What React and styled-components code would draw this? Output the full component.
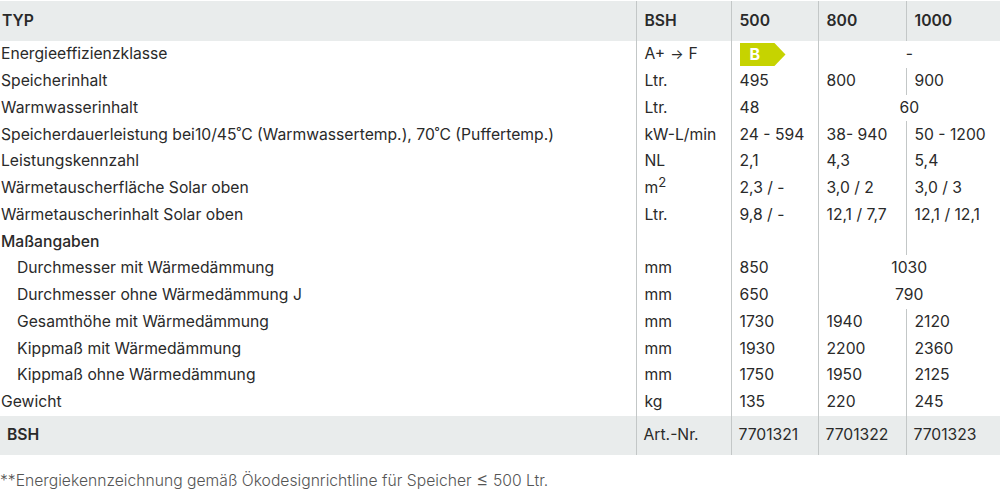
import React from "react";
import styled, { createGlobalStyle } from "styled-components";

const GlobalStyle = createGlobalStyle`
  html, body {
    margin: 0;
    padding: 0;
    background: #fff;
  }
  body {
    font-family: Inter, "Noto Sans", "Liberation Sans", sans-serif;
    color: #2a2a2a;
  }
`;

const Page = styled.div`
  width: 1000px;
  padding-top: 1px;
`;

const Table = styled.table`
  width: 1000px;
  border-collapse: collapse;
  table-layout: fixed;
  font-size: 15.7px;
`;

const HeadRow = styled.tr`
  height: 40px;
  background: #e9ecec;
  font-weight: 600;
`;

const FootRow = styled.tr`
  height: 39px;
  background: #e9ecec;
`;

const Row = styled.tr`
  height: 26.75px;
`;

const Cell = styled.td`
  padding: 0 8px;
  white-space: nowrap;
  vertical-align: middle;
  line-height: 20px;
  text-align: ${({ $center }) => ($center ? "center" : "left")};
  border-left: ${({ $first }) => ($first ? "none" : "1px solid #c3c7c7")};
`;

const LabelCell = styled(Cell)`
  padding-left: ${({ $indent }) => ($indent ? "17px" : "1px")};
  font-weight: ${({ $bold }) => ($bold ? 500 : 400)};
`;

const HeadCell = styled(Cell)`
  padding-left: ${({ $first }) => ($first ? "2px" : "8px")};
  font-weight: 600;
`;

const FootCell = styled(Cell)`
  padding-left: 7px;
  font-weight: ${({ $first }) => ($first ? 600 : 400)};
`;

const Badge = styled.span`
  display: inline-flex;
  align-items: center;
  width: 46px;
  height: 23px;
  padding-left: 10px;
  box-sizing: border-box;
  background: #c6d300;
  color: #fff;
  font-weight: 700;
  font-size: 16px;
  clip-path: polygon(0 0, 76% 0, 100% 50%, 76% 100%, 0 100%);
  vertical-align: middle;
`;

const Arrow = styled.span`
  font-size: 14px;
  margin: 0 5px;
`;

const Leq = styled.span`
  font-size: 19px;
  line-height: 0;
`;

const Note = styled.p`
  margin: 16px 0 0;
  font-size: 15.7px;
  line-height: 20px;
  font-weight: 300;
  color: #555;
`;

const rows = [
  {
    label: "Energieeffizienzklasse",
    unit: (
      <>
        A+<Arrow>→</Arrow>F
      </>
    ),
    cells: [<Badge key="b">B</Badge>],
    span: "-",
  },
  { label: "Speicherinhalt", unit: "Ltr.", cells: ["495", "800", "900"] },
  { label: "Warmwasserinhalt", unit: "Ltr.", cells: ["48"], span: "60" },
  {
    label: "Speicherdauerleistung bei10/45˚C (Warmwassertemp.), 70˚C (Puffertemp.)",
    unit: "kW-L/min",
    cells: ["24 - 594", "38- 940", "50 - 1200"],
  },
  { label: "Leistungskennzahl", unit: "NL", cells: ["2,1", "4,3", "5,4"] },
  {
    label: "Wärmetauscherfläche Solar oben",
    unit: (
      <>
        m<sup style={{ lineHeight: 0 }}>2</sup>
      </>
    ),
    cells: ["2,3 / -", "3,0 / 2", "3,0 / 3"],
  },
  { label: "Wärmetauscherinhalt Solar oben", unit: "Ltr.", cells: ["9,8 / -", "12,1 / 7,7", "12,1 / 12,1"] },
  { label: "Maßangaben", bold: true, unit: "", cells: ["", "", ""] },
  { label: "Durchmesser mit Wärmedämmung", indent: true, unit: "mm", cells: ["850"], span: "1030" },
  { label: "Durchmesser ohne Wärmedämmung J", indent: true, unit: "mm", cells: ["650"], span: "790" },
  { label: "Gesamthöhe mit Wärmedämmung", indent: true, unit: "mm", cells: ["1730", "1940", "2120"] },
  { label: "Kippmaß mit Wärmedämmung", indent: true, unit: "mm", cells: ["1930", "2200", "2360"] },
  { label: "Kippmaß ohne Wärmedämmung", indent: true, unit: "mm", cells: ["1750", "1950", "2125"] },
  { label: "Gewicht", unit: "kg", cells: ["135", "220", "245"] },
];

export default function App() {
  return (
    <Page>
      <GlobalStyle />
      <Table>
        <colgroup>
          <col style={{ width: 636 }} />
          <col style={{ width: 95 }} />
          <col style={{ width: 87 }} />
          <col style={{ width: 88 }} />
          <col style={{ width: 94 }} />
        </colgroup>
        <thead>
          <HeadRow>
            <HeadCell as="th" $first>TYP</HeadCell>
            <HeadCell as="th">BSH</HeadCell>
            <HeadCell as="th">500</HeadCell>
            <HeadCell as="th">800</HeadCell>
            <HeadCell as="th">1000</HeadCell>
          </HeadRow>
        </thead>
        <tbody>
          {rows.map((r, i) => (
            <Row key={i}>
              <LabelCell $first $indent={r.indent} $bold={r.bold}>
                {r.label}
              </LabelCell>
              <Cell>{r.unit}</Cell>
              {r.cells.map((c, j) => (
                <Cell key={j}>{c}</Cell>
              ))}
              {r.span && (
                <Cell colSpan={2} $center>
                  {r.span}
                </Cell>
              )}
            </Row>
          ))}
          <FootRow>
            <FootCell $first>BSH</FootCell>
            <FootCell>Art.-Nr.</FootCell>
            <FootCell>7701321</FootCell>
            <FootCell>7701322</FootCell>
            <FootCell>7701323</FootCell>
          </FootRow>
        </tbody>
      </Table>
      <Note>
        **Energiekennzeichnung gemäß Ökodesignrichtline für Speicher <Leq>≤</Leq> 500 Ltr.
      </Note>
    </Page>
  );
}
